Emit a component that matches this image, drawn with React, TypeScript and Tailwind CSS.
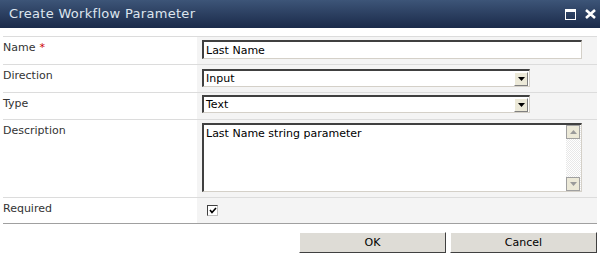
import React from "react";

// Champ texte avec bordure "inset" façon Windows classique
const insetBox =
  "border-t-2 border-l-2 border-t-[#404040] border-l-[#404040] border-r border-b border-r-[#d4d0c8] border-b-[#d4d0c8] bg-white";

function DropArrow() {
  return (
    <div className="w-[14px] h-[14px] bg-[#ece9d8] border border-t-white border-l-white border-r-[#808080] border-b-[#808080] flex items-center justify-center">
      <svg width="7" height="4" viewBox="0 0 7 4">
        <path d="M0 0H7L3.5 4Z" fill="#000" />
      </svg>
    </div>
  );
}

function SelectBox({ value }: { value: string }) {
  return (
    <div className={`${insetBox} w-[328px] h-[18px] flex items-center justify-between pl-[2px] pr-[1px]`}>
      <span className="text-[11px] text-black leading-none">{value}</span>
      <DropArrow />
    </div>
  );
}

function ScrollBtn({ up }: { up?: boolean }) {
  return (
    <div className="w-[14px] h-[14px] bg-[#ece9d8] border border-[#a0a0a0] flex items-center justify-center">
      <svg width="7" height="4" viewBox="0 0 7 4">
        <path d={up ? "M0 4H7L3.5 0Z" : "M0 0H7L3.5 4Z"} fill="#9a9a9a" />
      </svg>
    </div>
  );
}

function Row({
  label,
  children,
  className = "",
  required,
}: {
  label: string;
  children: React.ReactNode;
  className?: string;
  required?: boolean;
}) {
  return (
    <div className={`flex border-t border-[#dcdcdc] ${className}`}>
      <div className="w-[194px] pt-[4px] text-[11px] leading-[14px] text-[#333]">
        {label}
        {required && <span className="text-[#cc0000] ml-[4px]">*</span>}
      </div>
      <div className="flex-1 bg-[#f4f4f4] pl-[5px]">{children}</div>
    </div>
  );
}

export default function App() {
  return (
    <div
      className="w-[600px] h-[262px] bg-white overflow-hidden"
      style={{ fontFamily: "Tahoma, 'DejaVu Sans', sans-serif" }}
    >
      {/* TITRE */}
      <div className="h-[28px] flex items-center justify-between pl-[9px] pr-[4px] bg-gradient-to-b from-[#3d5578] to-[#1b2b4a]">
        <span className="text-[13px] text-[#dde5ee] tracking-[0.3px]">Create Workflow Parameter</span>
        <div className="flex items-center gap-[9px]">
          <svg width="11" height="11" viewBox="0 0 11 11">
            <rect x="0.5" y="0.5" width="10" height="10" fill="none" stroke="#fff" />
            <rect x="0" y="0" width="11" height="3" fill="#fff" />
          </svg>
          <svg width="11" height="10" viewBox="0 0 11 10">
            <path d="M1 1L10 9M10 1L1 9" stroke="#fff" strokeWidth="2.6" />
          </svg>
        </div>
      </div>

      {/* FORMULAIRE */}
      <div className="mt-[8px] mx-[3px] w-[594px]">
        <Row label="Name" required className="h-[28px]">
          <div className={`${insetBox} mt-[3px] w-[380px] h-[19px] flex items-center pl-[2px]`}>
            <span className="text-[11px] text-black leading-none">Last Name</span>
          </div>
        </Row>
        <Row label="Direction" className="h-[28px]">
          <div className="pt-[4px]">
            <SelectBox value="Input" />
          </div>
        </Row>
        <Row label="Type" className="h-[27px]">
          <div className="pt-[2px]">
            <SelectBox value="Text" />
          </div>
        </Row>
        <Row label="Description" className="h-[78px]">
          <div className={`${insetBox} mt-[3px] w-[380px] h-[69px] flex`}>
            <div className="flex-1 pl-[2px] pt-[2px] text-[11px] leading-[14px] text-black">
              Last Name string parameter
            </div>
            <div className="w-[15px] flex flex-col bg-[repeating-conic-gradient(#e8e8e8_0_25%,#ffffff_0_50%)] bg-[length:2px_2px]">
              <ScrollBtn up />
              <div className="flex-1" />
              <ScrollBtn />
            </div>
          </div>
        </Row>
        <Row label="Required" className="h-[26px]">
          <div className="pt-[7px] pl-[5px]">
            <div className="w-[11px] h-[11px] border border-[#404040] border-b-[#c0c0c0] border-r-[#c0c0c0] bg-white flex items-center justify-center">
              <svg width="8" height="7" viewBox="0 0 8 7">
                <path d="M1 3L3 5.5L7 1" fill="none" stroke="#000" strokeWidth="1.6" />
              </svg>
            </div>
          </div>
        </Row>
        <div className="border-t border-[#a0a0a0]" />
      </div>

      {/* BOUTONS */}
      <div className="flex justify-end gap-[4px] mt-[8px] pr-[3px]">
        {["OK", "Cancel"].map((t) => (
          <button
            key={t}
            type="button"
            className="w-[147px] h-[21px] bg-[#dedcd6] border border-t-white border-l-white border-r-[#404040] border-b-[#404040] text-[11px] text-black leading-none"
          >
            {t}
          </button>
        ))}
      </div>
    </div>
  );
}
